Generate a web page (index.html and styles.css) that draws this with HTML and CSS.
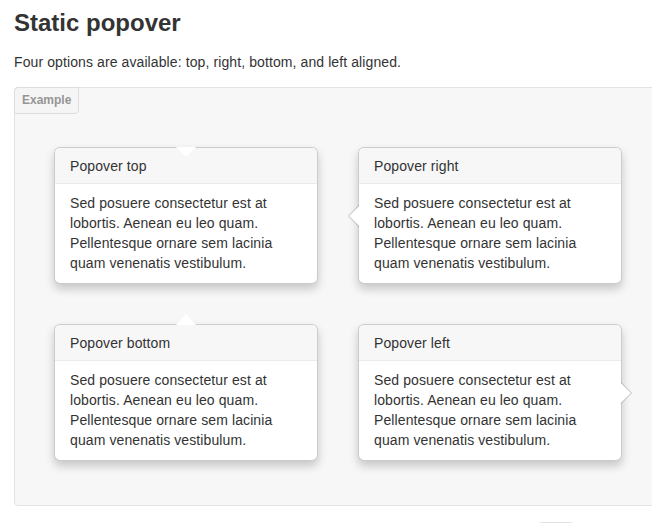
FILE: index.html
```html
<!DOCTYPE html>
<html>
<head>
<meta charset="utf-8">
<title>Static popover</title>
<link rel="stylesheet" href="styles.css">
</head>
<body>
<div class="page">
  <h3 class="title">Static popover</h3>
  <p class="lead">Four options are available: top, right, bottom, and left aligned.</p>
  <div class="example">
    <div class="example-tab">Example</div>
    <div class="grid">
      <div class="popover popover-top">
        <div class="arrow-down"></div>
        <h3 class="popover-title">Popover top</h3>
        <div class="popover-content">Sed posuere consectetur est at lobortis. Aenean eu leo quam. Pellentesque ornare sem lacinia quam venenatis vestibulum.</div>
      </div>
      <div class="popover popover-right">
        <div class="arrow-left"></div>
        <h3 class="popover-title">Popover right</h3>
        <div class="popover-content">Sed posuere consectetur est at lobortis. Aenean eu leo quam. Pellentesque ornare sem lacinia quam venenatis vestibulum.</div>
      </div>
      <div class="popover popover-bottom">
        <div class="arrow-up"></div>
        <h3 class="popover-title">Popover bottom</h3>
        <div class="popover-content">Sed posuere consectetur est at lobortis. Aenean eu leo quam. Pellentesque ornare sem lacinia quam venenatis vestibulum.</div>
      </div>
      <div class="popover popover-left">
        <div class="arrow-right"></div>
        <h3 class="popover-title">Popover left</h3>
        <div class="popover-content">Sed posuere consectetur est at lobortis. Aenean eu leo quam. Pellentesque ornare sem lacinia quam venenatis vestibulum.</div>
      </div>
    </div>
  </div>
  <div class="clip-btn"></div>
</div>
</body>
</html>
```

FILE: styles.css
```css
html, body {
  margin: 0;
  padding: 0;
  overflow: hidden;
  background: #fff;
}

body {
  font-family: "Liberation Sans", Arial, Helvetica, sans-serif;
  font-size: 14px;
  line-height: 20px;
  letter-spacing: 0.1px;
  color: #333;
}

.page {
  padding: 8px 0 0 14px;
  width: 720px;
}

.title {
  margin: 0;
  font-size: 24px;
  line-height: 30px;
  font-weight: bold;
  letter-spacing: 0;
  color: #333;
}

.lead {
  margin: 14px 0 0;
  font-size: 14px;
  line-height: 20px;
}

.example {
  position: relative;
  margin-top: 15px;
  background: #f7f7f7;
  border: 1px solid #e3e3e3;
  border-radius: 4px;
  padding: 59px 0 44px 39px;
}

.example-tab {
  position: absolute;
  top: -1px;
  left: -1px;
  padding: 4px 7px;
  font-size: 12px;
  line-height: 17px;
  font-weight: bold;
  letter-spacing: 0;
  color: #959595;
  background: #f5f5f5;
  border: 1px solid #ddd;
  border-radius: 4px 0 4px 0;
}

.grid {
  display: grid;
  grid-template-columns: 264px 264px;
  column-gap: 40px;
  row-gap: 40px;
}

.popover {
  position: relative;
  box-sizing: border-box;
  width: 264px;
  background: #fff;
  border: 1px solid rgba(0, 0, 0, 0.2);
  border-radius: 6px;
  box-shadow: 0 5px 10px rgba(0, 0, 0, 0.2);
}

.popover-title {
  margin: 0;
  padding: 9px 15px 7px 15px;
  font-size: 14px;
  line-height: 19px;
  font-weight: normal;
  color: #333;
  background: #f7f7f7;
  border-bottom: 1px solid #ebebeb;
  border-radius: 5px 5px 0 0;
}

.popover-content {
  padding: 9px 14px 10px 15px;
  line-height: 20px;
}

.arrow-down {
  position: absolute;
  top: -1px;
  left: 50%;
  margin-left: -10px;
  width: 0;
  height: 0;
  border-style: solid;
  border-width: 10px 10px 0;
  border-color: #fff transparent transparent;
}

.arrow-up {
  position: absolute;
  top: -11px;
  left: 50%;
  margin-left: -10px;
  width: 0;
  height: 0;
  border-style: solid;
  border-width: 0 10px 11px;
  border-color: transparent transparent #fff;
}

.arrow-left {
  position: absolute;
  top: 50%;
  left: -11px;
  margin-top: -11px;
  width: 0;
  height: 0;
  border-style: solid;
  border-width: 11px 11px 11px 0;
  border-color: transparent rgba(0, 0, 0, 0.25) transparent transparent;
}

.arrow-left::after {
  content: "";
  position: absolute;
  left: 1px;
  bottom: -10px;
  width: 0;
  height: 0;
  border-style: solid;
  border-width: 10px 10px 10px 0;
  border-color: transparent #fff transparent transparent;
}

.arrow-right {
  position: absolute;
  top: 50%;
  right: -11px;
  margin-top: -11px;
  width: 0;
  height: 0;
  border-style: solid;
  border-width: 11px 0 11px 11px;
  border-color: transparent transparent transparent rgba(0, 0, 0, 0.25);
}

.arrow-right::after {
  content: "";
  position: absolute;
  right: 1px;
  bottom: -10px;
  width: 0;
  height: 0;
  border-style: solid;
  border-width: 10px 0 10px 10px;
  border-color: transparent transparent transparent #fff;
}

.clip-btn {
  margin: 16px 0 0 524px;
  width: 34px;
  height: 24px;
  background: #fff;
  border: 1px solid #e1e1e8;
  border-radius: 4px 4px 0 0;
}
```
